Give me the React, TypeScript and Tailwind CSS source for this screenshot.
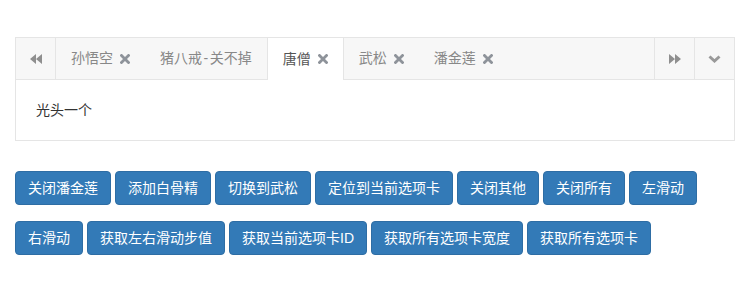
import React from 'react';

const tabs = [
  { title: '孙悟空', close: true },
  { title: '猪八戒-关不掉', close: false },
  { title: '唐僧', close: true, active: true },
  { title: '武松', close: true },
  { title: '潘金莲', close: true },
];

const buttons = [
  '关闭潘金莲',
  '添加白骨精',
  '切换到武松',
  '定位到当前选项卡',
  '关闭其他',
  '关闭所有',
  '左滑动',
  '右滑动',
  '获取左右滑动步值',
  '获取当前选项卡ID',
  '获取所有选项卡宽度',
  '获取所有选项卡',
];

function CloseIcon() {
  return (
    <svg width="10" height="10" viewBox="0 0 10 10" className="ml-[7px] shrink-0">
      <path d="M1.5 1.5 L8.5 8.5 M8.5 1.5 L1.5 8.5" stroke="#8e939a" strokeWidth="2.8" strokeLinecap="square" />
    </svg>
  );
}

function Backward() {
  return (
    <svg width="12" height="10" viewBox="0 0 12 10">
      <path d="M6 0 L0 5 L6 10 Z M12 0 L6 5 L12 10 Z" fill="#8f8f8f" />
    </svg>
  );
}

function Forward() {
  return (
    <svg width="12" height="10" viewBox="0 0 12 10">
      <path d="M0 0 L6 5 L0 10 Z M6 0 L12 5 L6 10 Z" fill="#8f8f8f" />
    </svg>
  );
}

function ChevronDown() {
  return (
    <svg width="13" height="8" viewBox="0 0 13 8">
      <path d="M1.5 1.5 L6.5 6 L11.5 1.5" stroke="#999" strokeWidth="3" fill="none" />
    </svg>
  );
}

function Title({ text }: { text: string }) {
  // the hyphen is a little wider in the original font
  const parts = text.split('-');
  if (parts.length === 1) return <>{text}</>;
  return (
    <>
      {parts[0]}
      <span className="px-[1.5px]">-</span>
      {parts[1]}
    </>
  );
}

export default function App() {
  return (
    <div
      className="bg-white px-[15px] pt-[37px] text-[14px] text-[#333]"
      style={{ fontFamily: '"Liberation Sans", "Noto Sans CJK SC", sans-serif' }}
    >
      {/* Tabs */}
      <div className="border border-[#e5e5e5]">
        <div className="flex h-[42px] bg-[#f7f7f7] border-b border-[#e5e5e5]">
          <button className="w-[40px] flex items-center justify-center border-r border-[#e5e5e5] shrink-0">
            <Backward />
          </button>
          <div className="flex flex-1 min-w-0">
            {tabs.map((t) =>
              t.active ? (
                <div
                  key={t.title}
                  className="flex items-center px-[15px] bg-white border-l border-r border-[#e5e5e5] -mb-px h-[42px] text-[#555]"
                >
                  <Title text={t.title} />
                  {t.close && <CloseIcon />}
                </div>
              ) : (
                <div key={t.title} className="flex items-center px-[15px] text-[#888]">
                  <Title text={t.title} />
                  {t.close && <CloseIcon />}
                </div>
              )
            )}
          </div>
          <button className="w-[40px] flex items-center justify-center border-l border-[#e5e5e5] shrink-0">
            <Forward />
          </button>
          <button className="w-[40px] flex items-center justify-center border-l border-[#e5e5e5] shrink-0">
            <ChevronDown />
          </button>
        </div>
        <div className="p-[20px] leading-[20px] text-[#333]">光头一个</div>
      </div>

      {/* Buttons */}
      <div className="flex flex-wrap gap-x-[4px] gap-y-[16px] mt-[30px]">
        {buttons.map((b) => (
          <button
            key={b}
            className="bg-[#337ab7] border border-[#2e6da4] text-white rounded-[4px] px-[12px] py-[6px] leading-[20px] text-[14px]"
          >
            {b}
          </button>
        ))}
      </div>
    </div>
  );
}
